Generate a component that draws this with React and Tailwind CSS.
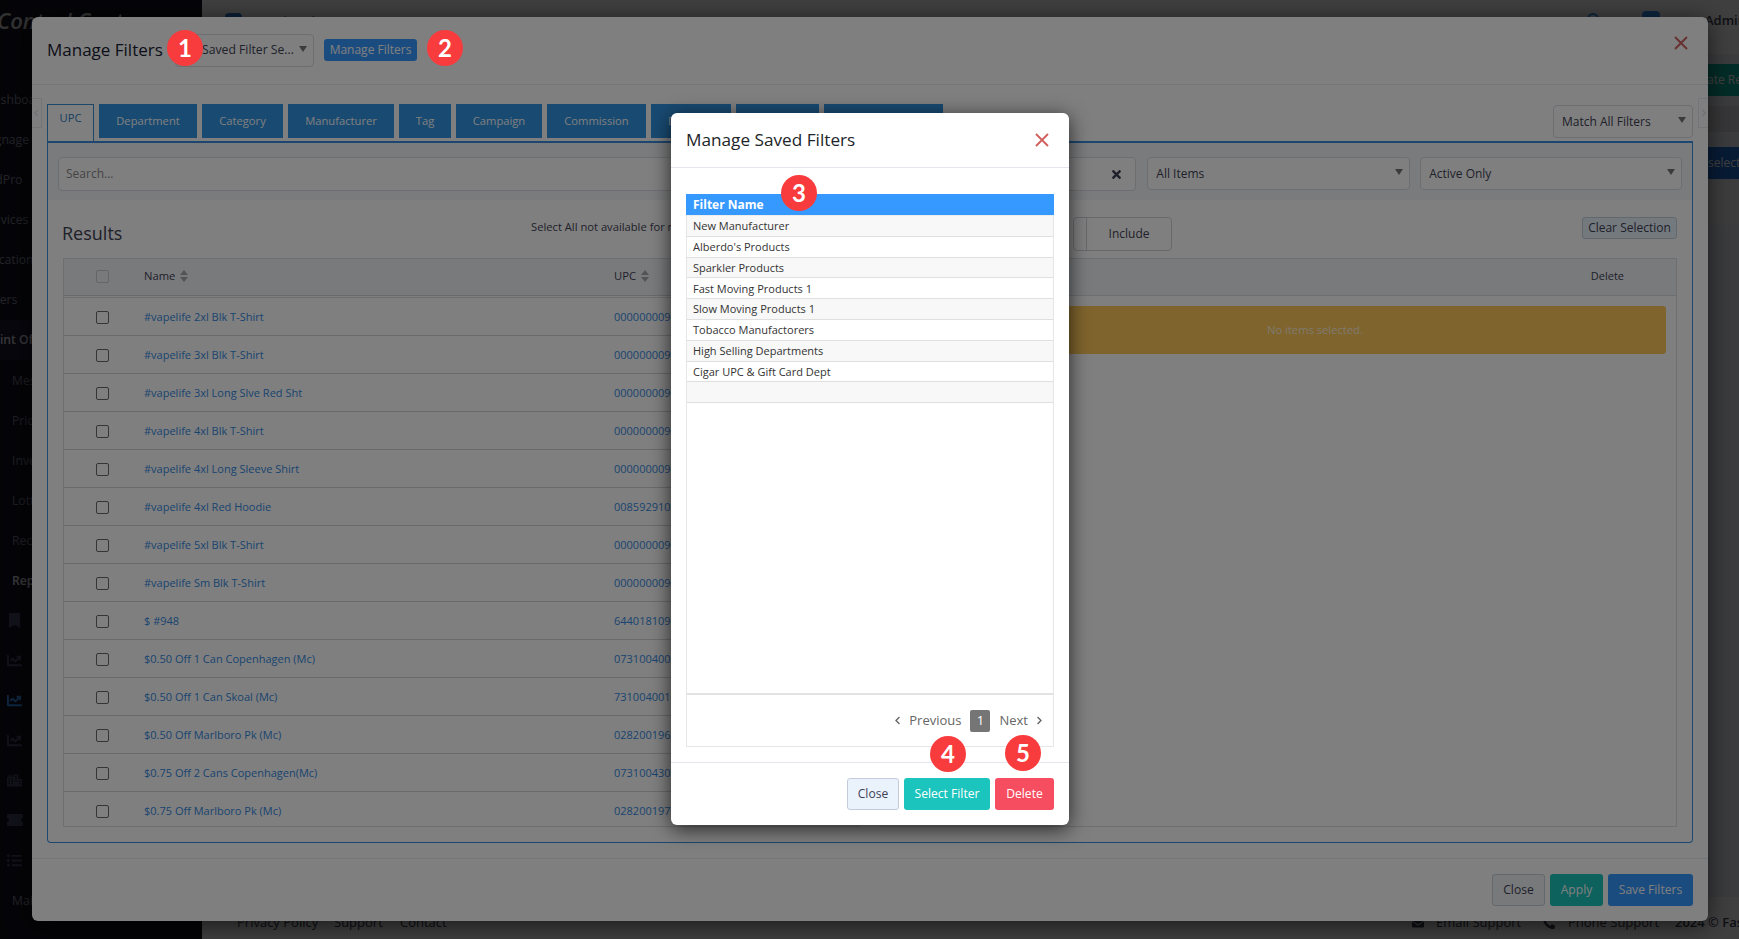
import { FaTimes, FaChevronLeft, FaChevronRight, FaPhoneAlt, FaEnvelope, FaBookmark, FaChartLine, FaCity, FaListUl } from "react-icons/fa";
import clsx from "clsx";

const tabs = [
  { name: "Department", w: "w-[98px]" },
  { name: "Category", w: "w-[81px]" },
  { name: "Manufacturer", w: "w-[106px]" },
  { name: "Tag", w: "w-[52px]" },
  { name: "Campaign", w: "w-[86px]" },
  { name: "Commission", w: "w-[99px]" },
  { name: "Discount", w: "w-[80px]" },
  { name: "Loyalty", w: "w-[83px]" },
  { name: "Price Group", w: "w-[119px]" },
];

const items = [
  ["#vapelife 2xl Blk T-Shirt", "00000000900"],
  ["#vapelife 3xl Blk T-Shirt", "00000000900"],
  ["#vapelife 3xl Long Slve Red Sht", "00000000900"],
  ["#vapelife 4xl Blk T-Shirt", "00000000900"],
  ["#vapelife 4xl Long Sleeve Shirt", "00000000900"],
  ["#vapelife 4xl Red Hoodie", "00859291000"],
  ["#vapelife 5xl Blk T-Shirt", "00000000900"],
  ["#vapelife Sm Blk T-Shirt", "00000000900"],
  ["$ #948", "64401810900"],
  ["$0.50 Off 1 Can Copenhagen (Mc)", "07310040000"],
  ["$0.50 Off 1 Can Skoal (Mc)", "73100400100"],
  ["$0.50 Off Marlboro Pk (Mc)", "02820019600"],
  ["$0.75 Off 2 Cans Copenhagen(Mc)", "07310043000"],
  ["$0.75 Off Marlboro Pk (Mc)", "02820019700"],
];

const savedFilters = [
  "New Manufacturer",
  "Alberdo's Products",
  "Sparkler Products",
  "Fast Moving Products 1",
  "Slow Moving Products 1",
  "Tobacco Manufactorers",
  "High Selling Departments",
  "Cigar UPC & Gift Card Dept",
  "",
];

const menu = ["Dashboard", "Signage", "VidPro", "Devices", "Locations", "Users", "Point Of Sale"];
const subMenu = ["Messages", "Pricebook", "Inventory", "Lottery", "Receipts", "Reports"];

// filled ticket shape used by the sidebar
const TicketIcon = () => (
  <svg width="16" height="12" viewBox="0 0 16 12" fill="currentColor">
    <path d="M1 0h14a1 1 0 0 1 1 1v3a2 2 0 0 0 0 4v3a1 1 0 0 1-1 1H1a1 1 0 0 1-1-1V8a2 2 0 0 0 0-4V1a1 1 0 0 1 1-1z" />
  </svg>
);

const menuIcons = [FaBookmark, FaChartLine, FaChartLine, FaChartLine, FaCity, TicketIcon, FaListUl];

const Caret = ({ className }) => (
  <span className={clsx("w-0 h-0 shrink-0 border-x-4 border-x-transparent border-t-[6px] border-t-[#777]", className)} />
);

const Select = ({ children, className }) => (
  <div className={clsx("flex items-center justify-between bg-white border border-[#d9dce3] rounded pl-2 pr-[6px] text-[12px] text-[#3f4254]", className)}>
    <span>{children}</span>
    <Caret className="-mt-[3px]" />
  </div>
);

const CloseIcon = () => (
  <svg width="14" height="14" viewBox="0 0 14 14" fill="none" stroke="#d0605e" strokeWidth="1.9">
    <path d="M1 1l12 12M13 1L1 13" />
  </svg>
);

const Badge = ({ n, className }) => (
  <div className={clsx("absolute w-9 h-9 rounded-full bg-[#f83b3c] text-white font-[Lato] font-bold text-[24px] flex items-center justify-center", className)}>
    {n}
  </div>
);

const Sidebar = () => (
  <aside className="w-[202px] h-full shrink-0 bg-[#13111f] overflow-hidden">
    <div className="h-20 pt-[4px] -ml-[3px] text-[22px] font-semibold italic text-[#c8c8cc] whitespace-nowrap">Control Center</div>
    {menu.map((m, i) => (
      <div
        key={m}
        className={clsx("h-10 flex items-center text-[12.2px] whitespace-nowrap", i === 6 ? "bg-[#1d1b33] text-[#d8d8e4] font-semibold" : "text-[#8a8aa0]")}
      >
        <span className="-ml-[15px]">{m}</span>
      </div>
    ))}
    {subMenu.map((m, i) => (
      <div key={m} className={clsx("h-10 flex items-center text-[12.2px] pl-3 pt-[2px]", i === 5 ? "text-[#e0e0ea] font-semibold" : "text-[#77778e]")}>
        {m}
      </div>
    ))}
    {menuIcons.map((Icon, i) => (
      <div key={i} className={clsx("h-10 flex items-center pl-[7px]", i === 2 ? "text-[#3699ff]" : "text-[#4a4968]")}>
        <Icon size={15} />
      </div>
    ))}
    <div className="h-10 flex items-center text-[12.2px] pl-3 pt-[2px] text-[#8a8aa0]">Maintenance</div>
  </aside>
);

const Page = () => (
  <div className="flex h-full w-full bg-[#eef0f8]">
    <Sidebar />
    <div className="flex-1 flex flex-col overflow-hidden">
      <header className="h-[54px] shrink-0 bg-white flex items-start pt-[10px] pl-[23px] text-[13px] text-[#3f4254]">
        <span className="w-[17px] h-4 mt-[3px] shrink-0 bg-[#2f80d8] rounded-sm" />
        <span className="ml-[14px] mt-[2px] w-[70px] shrink-0 whitespace-nowrap">Quick Links</span>
        <svg className="ml-[1260px] mt-[2px] shrink-0" width="16" height="16" viewBox="0 0 16 16" fill="none" stroke="#3699ff" strokeWidth="2">
          <circle cx="7" cy="7" r="5" />
          <path d="M11 11l4 4" />
        </svg>
        <span className="ml-[40px] w-[18px] h-4 mt-[1px] shrink-0 bg-[#3699ff] rounded-sm" />
        <span className="ml-[45px] mt-px font-semibold">Admin</span>
      </header>
      <div className="flex-1 flex flex-col items-end pt-[10px]">
        <div className="w-[60px] h-8 bg-[#0bb3a0] text-white text-[12px] flex items-center pl-[28px] whitespace-nowrap overflow-hidden">ate Report</div>
        <div className="w-[60px] h-[26px] mt-[10px] bg-[#dcdce4]" />
        <div className="w-[60px] h-8 mt-[15px] bg-[#1f6fd8] text-white text-[12px] flex items-center pl-[29px] whitespace-nowrap overflow-hidden">selected</div>
        <div className="w-[60px] h-11 mt-[2px] bg-[#f4f4f8]" />
      </div>
      <footer className="h-[42px] shrink-0 bg-white flex items-center text-[13px] text-[#3f4254] pl-[35px] pt-[9px] whitespace-nowrap">
        <span className="w-[97px] shrink-0">Privacy Policy</span>
        <span className="w-[66px] shrink-0">Support</span>
        <span className="w-[1012px] shrink-0">Contact</span>
        <FaEnvelope className="shrink-0" size={12} />
        <span className="ml-[12px] w-[107px] shrink-0">Email Support</span>
        <FaPhoneAlt className="shrink-0" size={12} />
        <span className="ml-[13px] w-[107px] shrink-0">Phone Support</span>
        <span className="font-semibold">2024 © FasTrax</span>
      </footer>
    </div>
  </div>
);

const SortIcon = () => (
  <span className="flex flex-col gap-[2px]">
    <span className="w-0 h-0 border-x-[4px] border-x-transparent border-b-[5px] border-b-[#a5a8b0]" />
    <span className="w-0 h-0 border-x-[4px] border-x-transparent border-t-[5px] border-t-[#a5a8b0]" />
  </span>
);

const ItemsTable = () => (
  <div className="flex-1 h-[569px] border border-[#dcdfe4] overflow-hidden text-[11px]">
    <div className="h-[37px] flex items-center pb-[2px] bg-[#f3f4f8] border-b border-[#d2d5da] text-[#3f4254]">
      <span className="ml-[32px] w-[13px] h-[13px] rounded-[2px] border border-[#cbcbcb]" />
      <span className="ml-[35px] w-[470px] flex items-center gap-[5px] text-[11.2px]">Name <SortIcon /></span>
      <span className="flex items-center gap-[5px] text-[11.2px]">UPC <SortIcon /></span>
    </div>
    <div className="h-[2px] border-b border-[#dcdfe4]" />
    {items.map(([name, upc], i) => (
      <div key={i} className="h-[38px] flex items-center pt-px border-b border-[#d2d5da] text-[#3489e0]">
        <span className="ml-[32px] w-[13px] h-[13px] rounded-[2px] border border-[#6b6b6b]" />
        <span className="ml-[35px] w-[470px]">{name}</span>
        <span>{upc}</span>
      </div>
    ))}
  </div>
);

const FiltersModal = () => (
  <div className="mt-[17px] ml-8 w-[1676px] h-[904px] bg-white rounded-md shadow-[0_4px_24px_rgba(0,0,0,0.6)] flex flex-col text-[#3f4254]">
    <div className="h-[68px] shrink-0 border-b border-[#ebedf3] flex items-start px-[15px]">
      <h5 className="mt-[20px] text-[17px] leading-[26px] w-[128px] text-[#181c32] whitespace-nowrap">Manage Filters</h5>
      <div className="mt-[17px] w-[139px] h-[33px] border border-[#d9dce3] rounded flex items-center pl-[26px] pr-[6px] justify-between text-[12.2px] whitespace-nowrap text-[#3f4254]">
        Saved Filter Se... <Caret className="-mt-[3px]" />
      </div>
      <button className="mt-[22px] ml-[10px] w-[93px] h-[22px] rounded-[3px] bg-[#3699ff] text-white text-[12px]">Manage Filters</button>
      <span className="ml-auto mt-[19px] mr-[5px]"><CloseIcon /></span>
    </div>

    <div className="flex-1 px-[15px] relative">
      <div className="h-[56px] flex items-start justify-between">
        <div className="flex gap-[5px] pt-[19px] text-[11.2px]">
          <div className="w-[47px] h-[37px] border border-b-0 border-[#3a8ed0] text-[#2b7cc4] bg-white flex justify-center pt-[5px]">UPC</div>
          {tabs.map((t) => (
            <div key={t.name} className={clsx("h-[34px] bg-[#3194e4] text-white flex items-center justify-center", t.w)}>{t.name}</div>
          ))}
        </div>
        <Select className="mt-[20px] w-[140px] h-[33px]">Match All Filters</Select>
      </div>

      <div className="h-[702px] border border-t-2 border-[#3a8ee0] rounded-b">
        <div className="h-[57px] bg-[#f5f7f9] flex items-start pt-[14px] px-[10px]">
          <div className="w-[1079px] h-[34px] bg-white border border-[#d9dce3] rounded flex items-center justify-between pl-[7px] pr-[12px] text-[12px] text-[#8a8a8a]">
            Search... <FaTimes size={13} className="text-[#3f4254]" />
          </div>
          <Select className="ml-[11px] w-[263px] h-[33px]">All Items</Select>
          <Select className="ml-[10px] w-[262px] h-[33px]">Active Only</Select>
        </div>
        <div className="h-[58px] flex items-start pl-[14px] pr-[15px]">
          <h4 className="mt-[20px] text-[18px] leading-[27px] w-[469px] text-[#3f4254]">Results</h4>
          <span className="mt-[19px] text-[11.2px] w-[542px]">Select All not available for more than 1000 items</span>
          <div className="mt-[17px] w-[99px] h-[34px] border border-[#cfd3da] rounded flex text-[12px]">
            <span className="w-[13px] border-r border-[#cfd3da]" />
            <span className="flex-1 flex items-center justify-center">Include</span>
          </div>
          <button className="ml-auto mt-[17px] w-[95px] h-[22px] rounded-[3px] border border-[#c3d1dc] bg-[#e8f3fd] text-[12px] whitespace-nowrap">Clear Selection</button>
        </div>
        <div className="flex gap-[20px] px-[15px]">
          <ItemsTable />
          <div className="flex-1 h-[569px] border border-[#dcdfe4]">
            <div className="h-[37px] flex items-center justify-end pb-[2px] pr-[52px] bg-[#f3f4f8] border-b border-[#dcdfe4] text-[11px]">Delete</div>
            <div className="mx-[10px] mt-[10px] h-[48px] rounded-[3px] bg-[#ffc85a] text-[#fff3da] text-[11.2px] flex items-center">
              <span className="ml-[376px]">No items selected.</span>
            </div>
          </div>
        </div>
      </div>

      {/* tab scroll arrows */}
      <div className="absolute left-0 top-[13px] w-[10px] h-[30px] border border-l-0 border-[#e8eaf0] flex items-center text-[#d8e0e8]">
        <FaChevronLeft size={8} />
      </div>
      <div className="absolute right-0 top-[13px] w-[10px] h-[30px] border border-r-0 border-[#e8eaf0] flex items-center justify-end text-[#d8e0e8]">
        <FaChevronRight size={8} />
      </div>
    </div>

    <div className="h-[63px] shrink-0 border-t border-[#ebedf3] flex justify-end gap-[5px] pr-[15px] pt-[15px] text-[12.1px]">
      <button className="w-[53px] h-8 rounded-[3px] border border-[#c8cfd8] bg-[#f0f3f7]">Close</button>
      <button className="w-[53px] h-8 rounded-[3px] bg-[#1bc5bd] text-white">Apply</button>
      <button className="w-[85px] h-8 rounded-[3px] bg-[#3699ff] text-white">Save Filters</button>
    </div>
  </div>
);

const SavedFiltersModal = () => (
  <div className="mt-[113px] ml-[671px] w-[398px] h-[712px] bg-white rounded-md shadow-[0_4px_20px_rgba(0,0,0,0.7)] flex flex-col">
    <div className="h-[55px] shrink-0 border-b border-[#e4e6ef] flex items-center justify-between pl-[15px] pr-[20px]">
      <h5 className="text-[17.2px] text-[#212529]">Manage Saved Filters</h5>
      <CloseIcon />
    </div>
    <div className="flex-1 px-[15px] pt-[26px]">
      <div className="h-[553px] border border-[#e6e6e6] flex flex-col text-[#333]">
        <div className="h-[21px] shrink-0 -mx-px -mt-px bg-[#3699ff] text-white text-[12px] font-bold flex items-center pl-[7px]">Filter Name</div>
        <div className="h-px shrink-0 bg-[#ececec]" />
        {savedFilters.map((f, i) => (
          <div key={i} className={clsx("h-[20.8px] shrink-0 border-b border-[#dfdfdf] flex items-center pt-px pl-[6px] text-[11px]", i % 2 === 0 && "bg-[#f8f8f8]")}>{f}</div>
        ))}
        <div className="flex-1" />
        <div className="h-[53px] shrink-0 border-t-2 border-[#e2e2e2] flex items-center justify-end pr-[9px] text-[13px] text-[#666]">
          <FaChevronLeft size={9} />
          <span className="ml-[7px]">Previous</span>
          <span className="mx-[9px] w-5 h-[22px] rounded-[2px] bg-[#757575] text-white flex items-center justify-center">1</span>
          <span className="mr-[7px]">Next</span>
          <FaChevronRight size={9} />
        </div>
      </div>
    </div>
    <div className="h-[63px] shrink-0 border-t border-[#e4e6ef] flex justify-end gap-[5px] pr-[15px] pt-[15px] text-[12.1px]">
      <button className="w-[52px] h-8 rounded-[3px] border border-[#c3ccd8] bg-[#eaf3fc] text-[#3f4254]">Close</button>
      <button className="w-[86px] h-8 rounded-[3px] bg-[#1bc5bd] text-white">Select Filter</button>
      <button className="w-[59px] h-8 rounded-[3px] bg-[#f64e60] text-white">Delete</button>
    </div>
  </div>
);

export default function App() {
  return (
    <div className="relative w-[1739px] h-[939px] overflow-hidden font-['Open_Sans','Noto_Sans',sans-serif]">
      <Page />
      <div className="absolute inset-0 bg-black/50">
        <FiltersModal />
      </div>
      <div className="absolute inset-0 bg-black/50">
        <SavedFiltersModal />
      </div>
      <Badge n={1} className="left-[167px] top-[30px]" />
      <Badge n={2} className="left-[427px] top-[30px]" />
      <Badge n={3} className="left-[781px] top-[175px]" />
      <Badge n={4} className="left-[930px] top-[736px]" />
      <Badge n={5} className="left-[1005px] top-[735px]" />
    </div>
  );
}
